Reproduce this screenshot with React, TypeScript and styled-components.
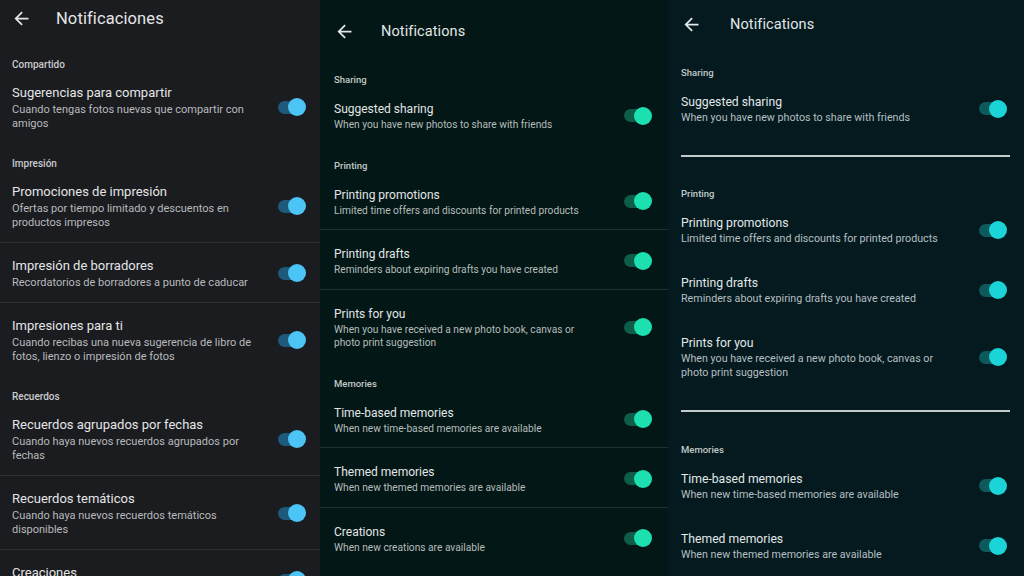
import React from "react";
import styled, { createGlobalStyle } from "styled-components";

const GlobalStyle = createGlobalStyle`
  html, body {
    margin: 0;
    padding: 0;
    background: #000;
    overflow: hidden;
  }
  body {
    font-family: Roboto, "Noto Sans", "Liberation Sans", sans-serif;
    -webkit-font-smoothing: antialiased;
  }
`;

type Skin = {
  width: number;
  bg: string;
  text: string;
  sub: string;
  label: string;
  thumb: string;
  track: string;
  line: string;
  padL: number;
  padR: number;
  headTop: number;
  headH: number;
  arrowX: number;
  titleX: number;
  headSize: number;
  listTop: number;
  labelSize: number;
  titleSize: number;
  subSize: number;
  titleLH: number;
  subLH: number;
  descWidth: number;
  rowTop: number;
  rowBottom: number;
  sectionTop: number;
  rowLines: boolean;
  sectionRule: boolean;
  ruleTop: number;
  ruleBottom: number;
};

type Item = { title: string; desc: string };
type Group = { label: string; items: Item[] };

const spanish: Group[] = [
  {
    label: "Compartido",
    items: [
      {
        title: "Sugerencias para compartir",
        desc: "Cuando tengas fotos nuevas que compartir con amigos",
      },
    ],
  },
  {
    label: "Impresión",
    items: [
      {
        title: "Promociones de impresión",
        desc: "Ofertas por tiempo limitado y descuentos en productos impresos",
      },
      {
        title: "Impresión de borradores",
        desc: "Recordatorios de borradores a punto de caducar",
      },
      {
        title: "Impresiones para ti",
        desc: "Cuando recibas una nueva sugerencia de libro de fotos, lienzo o impresión de fotos",
      },
    ],
  },
  {
    label: "Recuerdos",
    items: [
      {
        title: "Recuerdos agrupados por fechas",
        desc: "Cuando haya nuevos recuerdos agrupados por fechas",
      },
      {
        title: "Recuerdos temáticos",
        desc: "Cuando haya nuevos recuerdos temáticos disponibles",
      },
      { title: "Creaciones", desc: "Cuando haya nuevas creaciones disponibles" },
    ],
  },
];

const english: Group[] = [
  {
    label: "Sharing",
    items: [
      {
        title: "Suggested sharing",
        desc: "When you have new photos to share with friends",
      },
    ],
  },
  {
    label: "Printing",
    items: [
      {
        title: "Printing promotions",
        desc: "Limited time offers and discounts for printed products",
      },
      {
        title: "Printing drafts",
        desc: "Reminders about expiring drafts you have created",
      },
      {
        title: "Prints for you",
        desc: "When you have received a new photo book, canvas or photo print suggestion",
      },
    ],
  },
  {
    label: "Memories",
    items: [
      {
        title: "Time-based memories",
        desc: "When new time-based memories are available",
      },
      {
        title: "Themed memories",
        desc: "When new themed memories are available",
      },
      { title: "Creations", desc: "When new creations are available" },
    ],
  },
];

const greySkin: Skin = {
  width: 320,
  bg: "#1b1c1f",
  text: "#e4e5e7",
  sub: "#b7babe",
  label: "#c9cbce",
  thumb: "#4dc4f6",
  track: "#1d5a7c",
  line: "#2d2f33",
  padL: 12,
  padR: 14,
  headTop: 0,
  headH: 36,
  arrowX: 11,
  titleX: 56,
  headSize: 16.5,
  listTop: 8,
  labelSize: 10,
  titleSize: 13,
  subSize: 11,
  titleLH: 20,
  subLH: 14,
  descWidth: 240,
  rowTop: 13,
  rowBottom: 12,
  sectionTop: 15,
  rowLines: true,
  sectionRule: false,
  ruleTop: 0,
  ruleBottom: 0,
};

const greenSkin: Skin = {
  width: 348,
  bg: "#031716",
  text: "#e2e6e5",
  sub: "#b5bdbb",
  label: "#c2c9c7",
  thumb: "#1de0b1",
  track: "#0e5d48",
  line: "#1d3230",
  padL: 14,
  padR: 16,
  headTop: 10,
  headH: 42,
  arrowX: 14,
  titleX: 61,
  headSize: 14.5,
  listTop: 6,
  labelSize: 9.5,
  titleSize: 12,
  subSize: 10.2,
  titleLH: 18,
  subLH: 13.5,
  descWidth: 250,
  rowTop: 15,
  rowBottom: 12,
  sectionTop: 16,
  rowLines: true,
  sectionRule: false,
  ruleTop: 0,
  ruleBottom: 0,
};

const tealSkin: Skin = {
  width: 356,
  bg: "#041a1f",
  text: "#e2e7e8",
  sub: "#b6bfc1",
  label: "#c1c9cb",
  thumb: "#1bd4d8",
  track: "#0d5a5c",
  line: "#c3cbcb",
  padL: 13,
  padR: 17,
  headTop: 0,
  headH: 48,
  arrowX: 13,
  titleX: 62,
  headSize: 14.5,
  listTop: 0,
  labelSize: 9.5,
  titleSize: 12.2,
  subSize: 10.7,
  titleLH: 18,
  subLH: 14,
  descWidth: 262,
  rowTop: 15,
  rowBottom: 13,
  sectionTop: 18.5,
  rowLines: false,
  sectionRule: true,
  ruleTop: 17,
  ruleBottom: 13,
};

const Screens = styled.div`
  display: flex;
  width: 1024px;
  height: 576px;
  overflow: hidden;
`;

const Screen = styled.section<{ $s: Skin }>`
  flex: 0 0 ${({ $s }) => $s.width}px;
  height: 576px;
  overflow: hidden;
  background: ${({ $s }) => $s.bg};
  color: ${({ $s }) => $s.text};
`;

const TopBar = styled.header<{ $s: Skin }>`
  display: flex;
  align-items: center;
  height: ${({ $s }) => $s.headH}px;
  margin-top: ${({ $s }) => $s.headTop}px;
  padding-left: ${({ $s }) => $s.arrowX}px;
`;

const BackButton = styled.span<{ $s: Skin }>`
  display: flex;
  align-items: center;
  justify-content: center;
  width: 21px;
  height: 21px;
  margin-right: ${({ $s }) => $s.titleX - $s.arrowX - 21}px;
  color: ${({ $s }) => $s.text};
`;

const ScreenTitle = styled.h1<{ $s: Skin }>`
  margin: 0;
  font-size: ${({ $s }) => $s.headSize}px;
  font-weight: 400;
  letter-spacing: 0.1px;
`;

const List = styled.div<{ $s: Skin }>`
  padding-top: ${({ $s }) => $s.listTop}px;
`;

const Group = styled.div<{ $s: Skin }>`
  padding-top: ${({ $s }) => $s.sectionTop}px;
`;

const GroupLabel = styled.h2<{ $s: Skin }>`
  margin: 0;
  padding-left: ${({ $s }) => $s.padL}px;
  font-size: ${({ $s }) => $s.labelSize}px;
  line-height: 11px;
  font-weight: 500;
  color: ${({ $s }) => $s.label};
`;

const Rule = styled.hr<{ $s: Skin }>`
  border: none;
  height: 2px;
  background: ${({ $s }) => $s.line};
  margin: ${({ $s }) => `${$s.ruleTop}px ${$s.padR - 3}px ${$s.ruleBottom}px ${$s.padL}px`};
`;

const Row = styled.div<{ $s: Skin; $lined: boolean }>`
  display: flex;
  align-items: center;
  gap: 24px;
  padding: ${({ $s }) => `${$s.rowTop}px ${$s.padR}px ${$s.rowBottom}px ${$s.padL}px`};
  border-top: ${({ $s, $lined }) => ($lined ? `1px solid ${$s.line}` : "none")};
`;

const RowText = styled.div`
  flex: 1;
  min-width: 0;
`;

const RowTitle = styled.div<{ $s: Skin }>`
  font-size: ${({ $s }) => $s.titleSize}px;
  line-height: ${({ $s }) => $s.titleLH}px;
  color: ${({ $s }) => $s.text};
`;

const RowDesc = styled.div<{ $s: Skin }>`
  font-size: ${({ $s }) => $s.subSize}px;
  line-height: ${({ $s }) => $s.subLH}px;
  color: ${({ $s }) => $s.sub};
  max-width: ${({ $s }) => $s.descWidth}px;
`;

/* switch in its "on" state: short track with the knob sitting over its right end */
const Switch = styled.span<{ $s: Skin }>`
  position: relative;
  flex: 0 0 28px;
  height: 18px;

  &::before {
    content: "";
    position: absolute;
    left: 0;
    top: 2.5px;
    width: 22px;
    height: 13px;
    border-radius: 7px;
    background: ${({ $s }) => $s.track};
  }

  &::after {
    content: "";
    position: absolute;
    right: 0;
    top: 0;
    width: 18px;
    height: 18px;
    border-radius: 50%;
    background: ${({ $s }) => $s.thumb};
  }
`;

const ArrowBack = () => (
  <svg width="21" height="21" viewBox="0 0 24 24" fill="currentColor">
    <path d="M20 11H7.83l5.59-5.59L12 4l-8 8 8 8 1.41-1.41L7.83 13H20v-2z" />
  </svg>
);

const SettingsScreen = ({
  skin,
  heading,
  groups,
}: {
  skin: Skin;
  heading: string;
  groups: Group[];
}) => (
  <Screen $s={skin}>
    <TopBar $s={skin}>
      <BackButton $s={skin}>
        <ArrowBack />
      </BackButton>
      <ScreenTitle $s={skin}>{heading}</ScreenTitle>
    </TopBar>
    <List $s={skin}>
      {groups.map((g, gi) => (
        <React.Fragment key={g.label}>
          {skin.sectionRule && gi > 0 && <Rule $s={skin} />}
          <Group $s={skin}>
            <GroupLabel $s={skin}>{g.label}</GroupLabel>
            {g.items.map((item, i) => (
              <Row key={item.title} $s={skin} $lined={skin.rowLines && i > 0}>
                <RowText>
                  <RowTitle $s={skin}>{item.title}</RowTitle>
                  <RowDesc $s={skin}>{item.desc}</RowDesc>
                </RowText>
                <Switch $s={skin} />
              </Row>
            ))}
          </Group>
        </React.Fragment>
      ))}
    </List>
  </Screen>
);

const App = () => (
  <>
    <GlobalStyle />
    <Screens>
      <SettingsScreen skin={greySkin} heading="Notificaciones" groups={spanish} />
      <SettingsScreen skin={greenSkin} heading="Notifications" groups={english} />
      <SettingsScreen skin={tealSkin} heading="Notifications" groups={english} />
    </Screens>
  </>
);

export default App;
